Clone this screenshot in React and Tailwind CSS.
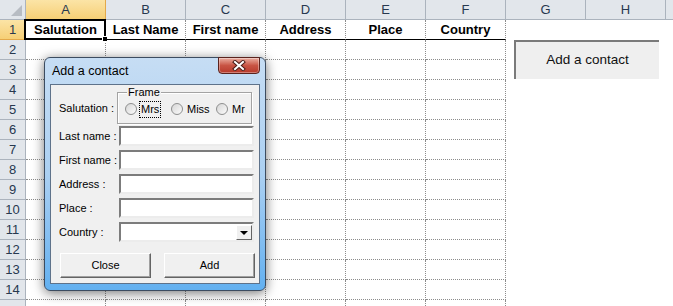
import React from 'react';

const cols = ['A', 'B', 'C', 'D', 'E', 'F', 'G', 'H'];
const heads = ['Salutation', 'Last Name', 'First name', 'Address', 'Place', 'Country'];
const rows = Array.from({ length: 15 }, (_, i) => i + 1);
const fields = ['Last name :', 'First name :', 'Address :', 'Place :', 'Country :'];

const Radio = ({ label, focus, width }) => (
    <div className={`flex items-center ${width}`}>
        <span className="w-[12px] h-[12px] rounded-full border border-[#8e8f8f] bg-linear-to-br from-[#d6d6d6] to-[#fbfbfb] shrink-0" />
        <span className={`ml-[2px] px-px leading-[15px] ${focus ? 'border border-dotted border-black' : 'border border-transparent'}`}>
            {label}
        </span>
    </div>
);

const WinButton = ({ children }) => (
    <button className="w-[91px] h-[25px] bg-[#f0f0f0] border border-t-white border-l-white border-b-[#646464] border-r-[#646464] shadow-[inset_-1px_-1px_0_#a0a0a0] text-[11px] text-black">
        {children}
    </button>
);

const App = () => {
    return (
        <div className="relative w-[673px] h-[306px] overflow-hidden bg-white font-['Liberation_Sans',Arial,sans-serif]">
            {/* sheet grid */}
            <div className="grid grid-cols-[26px_repeat(8,80px)_1fr] auto-rows-[20px]">
                {/* corner */}
                <div className="relative bg-[#e2e6eb] border-r border-b border-[#abb3bd]">
                    <div className="absolute right-[3px] bottom-[3px] w-0 h-0 border-l-[11px] border-l-transparent border-b-[11px] border-b-[#b7bcc3]" />
                </div>
                {cols.map((c) =>
                    c === 'A' ? (
                        <div key={c} className="flex items-center justify-center bg-linear-to-b from-[#fbe4a6] to-[#f6cf75] border-r border-b border-r-[#e3a94a] border-b-[#f2a93b] text-[13px] text-[#27384f]">
                            {c}
                        </div>
                    ) : (
                        <div key={c} className="flex items-center justify-center bg-[#e2e6eb] border-r border-b border-[#abb3bd] text-[13px] text-[#27384f]">
                            {c}
                        </div>
                    )
                )}
                <div className="bg-[#e2e6eb] border-b border-[#abb3bd]" />

                {rows.map((r) => (
                    <React.Fragment key={r}>
                        {r === 1 ? (
                            <div className="flex items-center justify-center bg-linear-to-b from-[#fbe4a6] to-[#f6cf75] border-r border-b border-r-[#f2a93b] border-b-[#e3a94a] text-[13px] text-[#27384f]">
                                {r}
                            </div>
                        ) : (
                            <div className="flex items-center justify-center bg-[#e2e6eb] border-r border-b border-[#abb3bd] text-[13px] text-[#27384f]">
                                {/* last row only peeks in at the bottom edge */}
                                {r < 15 ? r : ''}
                            </div>
                        )}
                        {heads.map((h, i) =>
                            r === 1 ? (
                                <div
                                    key={h}
                                    className="relative flex items-center justify-center border-r border-b border-dotted border-r-[#8c8c8c] border-b-black [border-bottom-style:solid] text-[13px] font-bold text-black"
                                >
                                    {h}
                                    {i === 0 && (
                                        <div className="absolute -left-[2px] -top-px -right-px -bottom-px border-2 border-black">
                                            <div className="absolute -right-[4px] -bottom-[4px] w-[6px] h-[6px] bg-black border border-white" />
                                        </div>
                                    )}
                                </div>
                            ) : (
                                <div key={h} className="border-r border-b border-dotted border-[#8c8c8c]" />
                            )
                        )}
                        <div />
                        <div />
                        <div />
                    </React.Fragment>
                ))}
            </div>

            {/* sheet button */}
            <button className="absolute left-[514px] top-[40px] w-[145px] h-[39px] bg-[#efefef] border-t-2 border-l-2 border-[#7a7a7a] text-[13.5px] text-[#111]">
                Add a contact
            </button>

            {/* dialog window */}
            <div className="absolute left-[44px] top-[57px] w-[222px] h-[234px] rounded-[6px] border border-[#3c4c60] bg-linear-to-b from-[#c6ddf4] via-[#abd0f2] to-[#62b0f0] shadow-[0_2px_12px_rgba(0,0,0,0.55)] flex flex-col">
                <div className="relative h-[26px] pl-[7px] flex items-center text-[12.5px] text-black">
                    Add a contact
                    <div className="absolute right-[5px] -top-px w-[42px] h-[17px] rounded-b-[4px] border border-[#5a231e] bg-linear-to-b from-[#e9ada1] via-[#c85444] to-[#b7392b] shadow-[inset_0_0_0_1px_rgba(255,255,255,0.35)] flex items-center justify-center">
                        <svg width="14" height="11" viewBox="0 0 14 11">
                            <path d="M3 2 L11 9 M11 2 L3 9" stroke="#4a1d18" strokeWidth="4" strokeLinecap="square" />
                            <path d="M3 2 L11 9 M11 2 L3 9" stroke="#ffffff" strokeWidth="2" strokeLinecap="square" />
                        </svg>
                    </div>
                </div>

                <div className="mx-[5px] h-[200px] border border-[#5e728a] bg-[#f0f0f0] pl-[8px] pt-[7px] text-[11px] text-black flex flex-col">
                    {/* salutation row */}
                    <div className="flex items-center h-[32px]">
                        <span className="w-[58px]">Salutation :</span>
                        <div className="relative w-[135px] h-[32px] border border-[#a3a3a3] shadow-[inset_1px_1px_0_#ffffff,1px_1px_0_#ffffff] flex items-center pl-[7px] pt-[2px]">
                            <span className="absolute left-[9px] -top-[8px] px-[1px] bg-[#f0f0f0] leading-[14px]">Frame</span>
                            <Radio label="Mrs" focus width="w-[46px]" />
                            <Radio label="Miss" width="w-[45px]" />
                            <Radio label="Mr" width="w-[30px]" />
                        </div>
                    </div>

                    {/* text fields */}
                    <div className="mt-[2px] flex flex-col gap-[4px]">
                        {fields.map((f, i) => (
                            <div key={f} className="flex items-center h-[20px]">
                                <span className="w-[60px]">{f}</span>
                                <div className="relative w-[135px] h-[20px] bg-white border-2 border-t-[#7c7c7c] border-l-[#7c7c7c] border-b-[#ececec] border-r-[#ececec]">
                                    {i === 4 && (
                                        <div className="absolute right-0 top-px w-[16px] h-[15px] bg-[#f0f0f0] border border-t-white border-l-white border-b-[#646464] border-r-[#646464] flex items-center justify-center">
                                            <div className="w-0 h-0 border-l-[4px] border-r-[4px] border-t-[4px] border-l-transparent border-r-transparent border-t-black" />
                                        </div>
                                    )}
                                </div>
                            </div>
                        ))}
                    </div>

                    {/* buttons */}
                    <div className="mt-[11px] flex gap-[13px] pl-px">
                        <WinButton>Close</WinButton>
                        <WinButton>Add</WinButton>
                    </div>
                </div>
            </div>
        </div>
    );
};

export default App;
